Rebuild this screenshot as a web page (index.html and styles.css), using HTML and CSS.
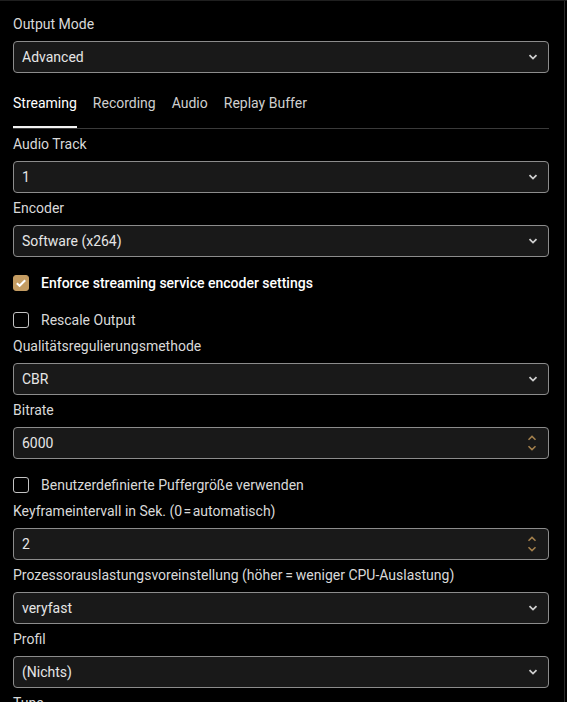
FILE: index.html
```html
<!DOCTYPE html>
<html>
  <head>
    <title>Output Settings</title>
    <link rel="stylesheet" href="styles.css">
  </head>
  <body>
    <div class="panel">
      <div class="field">
        <div class="label">Output Mode</div>
        <div class="control">
          <span>Advanced</span>
          <svg class="chev" width="10" height="6" viewBox="0 0 10 6"><path d="M1.5 1.2 L5 4.6 L8.5 1.2" /></svg>
        </div>
      </div>

      <div class="tabs">
        <div class="tab active">Streaming</div>
        <div class="tab">Recording</div>
        <div class="tab">Audio</div>
        <div class="tab">Replay Buffer</div>
      </div>

      <div class="field">
        <div class="label">Audio Track</div>
        <div class="control">
          <span>1</span>
          <svg class="chev" width="10" height="6" viewBox="0 0 10 6"><path d="M1.5 1.2 L5 4.6 L8.5 1.2" /></svg>
        </div>
      </div>

      <div class="field">
        <div class="label">Encoder</div>
        <div class="control">
          <span>Software (x264)</span>
          <svg class="chev" width="10" height="6" viewBox="0 0 10 6"><path d="M1.5 1.2 L5 4.6 L8.5 1.2" /></svg>
        </div>
      </div>

      <div class="check">
        <div class="box checked">
          <svg width="12" height="10" viewBox="0 0 12 10"><path d="M1.8 5.2 L4.6 7.8 L10.2 2.2" /></svg>
        </div>
        <span class="check-text strong">Enforce streaming service encoder settings</span>
      </div>

      <div class="check">
        <div class="box"></div>
        <span class="check-text">Rescale Output</span>
      </div>

      <div class="field">
        <div class="label">Qualitätsregulierungsmethode</div>
        <div class="control">
          <span>CBR</span>
          <svg class="chev" width="10" height="6" viewBox="0 0 10 6"><path d="M1.5 1.2 L5 4.6 L8.5 1.2" /></svg>
        </div>
      </div>

      <div class="field">
        <div class="label">Bitrate</div>
        <div class="control">
          <span>6000</span>
          <div class="spin">
            <svg width="10" height="6" viewBox="0 0 10 6"><path d="M1.5 4.8 L5 1.4 L8.5 4.8" /></svg>
            <svg width="10" height="6" viewBox="0 0 10 6"><path d="M1.5 1.2 L5 4.6 L8.5 1.2" /></svg>
          </div>
        </div>
      </div>

      <div class="check">
        <div class="box"></div>
        <span class="check-text">Benutzerdefinierte Puffergröße verwenden</span>
      </div>

      <div class="field">
        <div class="label">Keyframeintervall in Sek. (0&#8202;=&#8202;automatisch)</div>
        <div class="control">
          <span>2</span>
          <div class="spin">
            <svg width="10" height="6" viewBox="0 0 10 6"><path d="M1.5 4.8 L5 1.4 L8.5 4.8" /></svg>
            <svg width="10" height="6" viewBox="0 0 10 6"><path d="M1.5 1.2 L5 4.6 L8.5 1.2" /></svg>
          </div>
        </div>
      </div>

      <div class="field">
        <div class="label">Prozessorauslastungsvoreinstellung (höher&#8201;=&#8201;weniger CPU-Auslastung)</div>
        <div class="control">
          <span>veryfast</span>
          <svg class="chev" width="10" height="6" viewBox="0 0 10 6"><path d="M1.5 1.2 L5 4.6 L8.5 1.2" /></svg>
        </div>
      </div>

      <div class="field">
        <div class="label">Profil</div>
        <div class="control">
          <span>(Nichts)</span>
          <svg class="chev" width="10" height="6" viewBox="0 0 10 6"><path d="M1.5 1.2 L5 4.6 L8.5 1.2" /></svg>
        </div>
      </div>

      <div class="field">
        <div class="label">Tune</div>
      </div>
    </div>
  </body>
</html>
```

FILE: styles.css
```css
html, body {
  background: #000;
}
body {
  margin: 0;
  height: 701px;
  overflow: hidden;
  border-top: 1px solid #1f1f1f;
  font-family: Roboto, "Noto Sans", sans-serif;
  font-size: 14px;
  color: #d9d9d9;
}
.panel {
  width: 536px;
  height: 100%;
  padding: 13px 15px 0 13px;
  border-right: 1px solid #2a2a2a;
}
.field {
  margin-bottom: 5px;
}
.label {
  line-height: 20px;
  margin-bottom: 7px;
  white-space: nowrap;
}
.control {
  display: flex;
  align-items: center;
  justify-content: space-between;
  box-sizing: border-box;
  height: 32px;
  padding: 0 10px 0 8px;
  background: #191919;
  border: 1px solid #8c8c8c;
  border-radius: 4px;
  color: #e6e6e6;
}
.chev path {
  fill: none;
  stroke: #d0d0d0;
  stroke-width: 1.8;
}
.spin {
  display: flex;
  flex-direction: column;
  gap: 4px;
  margin-right: 1px;
}
.spin svg {
  display: block;
}
.spin path {
  fill: none;
  stroke: #a4804d;
  stroke-width: 1.5;
}
.tabs {
  display: flex;
  gap: 16px;
  padding-top: 15px;
  border-bottom: 1px solid #3a3a3a;
  margin-bottom: 5px;
}
.tab {
  line-height: 20px;
  padding-bottom: 13px;
  border-bottom: 2px solid transparent;
  color: #cfcfcf;
}
.tab.active {
  color: #fff;
  border-bottom-color: #f2f2f2;
}
.check {
  display: flex;
  align-items: center;
  gap: 12px;
  height: 32px;
  margin-top: 10px;
}
.check + .check {
  margin-top: 5px;
}
.box {
  display: flex;
  align-items: center;
  justify-content: center;
  box-sizing: border-box;
  width: 16px;
  height: 16px;
  border: 1px solid #c4c4c4;
  border-radius: 3px;
}
.box.checked {
  background: #c49c62;
  border-color: #c49c62;
}
.box path {
  fill: none;
  stroke: #fff;
  stroke-width: 2;
}
.check-text {
  color: #d9d9d9;
}
.check-text.strong {
  color: #fff;
  font-weight: 500;
}
```
